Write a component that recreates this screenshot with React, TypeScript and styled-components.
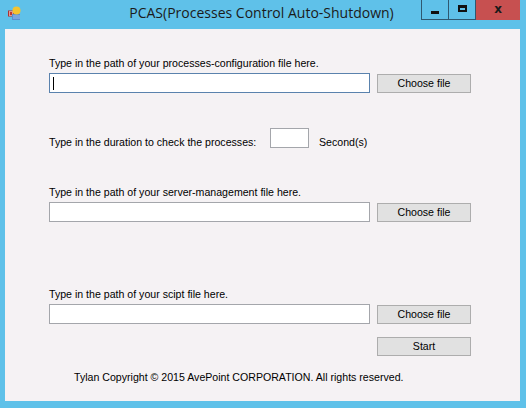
import React from "react";
import styled, { createGlobalStyle } from "styled-components";

const GlobalStyle = createGlobalStyle`
  html, body {
    margin: 0;
    padding: 0;
    background: #5fc1e9;
  }
`;

const Window = styled.div`
  width: 526px;
  height: 408px;
  background: #5fc1e9;
  display: flex;
  flex-direction: column;
  font-family: "Liberation Sans", Arial, sans-serif;
`;

const TitleBar = styled.div`
  height: 29px;
  display: flex;
  align-items: flex-start;
  padding: 0 6px 0 8px;
`;

const AppIcon = styled.svg`
  width: 13px;
  height: 14px;
  margin-top: 6px;
  flex: none;
`;

const Title = styled.div`
  flex: 1;
  text-align: center;
  font-family: "Open Sans", "Noto Sans", sans-serif;
  font-size: 14px;
  line-height: 20px;
  margin-top: 3px;
  padding-left: 81px;
  color: #1b1b1b;
  white-space: nowrap;
`;

const Controls = styled.div`
  display: flex;
  height: 20px;
  flex: none;
`;

const CtrlButton = styled.div<{ $close?: boolean; $w: number }>`
  width: ${(p) => p.$w}px;
  height: 20px;
  box-sizing: border-box;
  display: flex;
  align-items: center;
  justify-content: center;
  background: ${(p) => (p.$close ? "#c75050" : "transparent")};
  border: ${(p) => (p.$close ? "none" : "1px solid #2f5870")};
  border-top: none;
  & + & {
    border-left: none;
  }
`;

const MinGlyph = styled.div`
  width: 8px;
  height: 3px;
  background: #111;
  margin-top: 5px;
`;

const MaxGlyph = styled.div`
  width: 9px;
  height: 7px;
  box-sizing: border-box;
  border: 2px solid #111;
  border-top-width: 3px;
  margin-top: -3px;
`;

const CloseGlyph = styled.span`
  font-family: "DejaVu Sans", sans-serif;
  font-weight: bold;
  font-size: 12px;
  line-height: 12px;
  color: #1a1a1a;
  margin-top: -3px;
`;

const Client = styled.div`
  flex: 1;
  margin: 0 6px 7px 5px;
  background: #f5f2f4;
  padding: 28px 0 0 44px;
  display: flex;
  flex-direction: column;
  font-size: 10.6px;
  line-height: 13px;
  color: #000;
`;

const Field = styled.div<{ $top: number }>`
  margin-top: ${(p) => p.$top}px;
  display: flex;
  flex-direction: column;
  gap: 3px;
`;

const Label = styled.div`
  white-space: nowrap;
`;

const Row = styled.div`
  display: flex;
  align-items: flex-start;
  gap: 7px;
`;

const TextBox = styled.div<{ $focused?: boolean; $w: number }>`
  width: ${(p) => p.$w}px;
  height: 20px;
  box-sizing: border-box;
  background: #fff;
  border: 1px solid ${(p) => (p.$focused ? "#5a82ad" : "#a4a6ab")};
  position: relative;
`;

const Caret = styled.div`
  position: absolute;
  left: 3px;
  top: 3px;
  width: 1px;
  height: 13px;
  background: #000;
`;

const Button = styled.div<{ $nudge?: number }>`
  width: 94px;
  height: 19px;
  margin-top: ${(p) => p.$nudge ?? 0}px;
  box-sizing: border-box;
  background: #e1e1e1;
  border: 1px solid #adadad;
  display: flex;
  align-items: center;
  justify-content: center;
  padding-bottom: 1px;
`;

const DurationRow = styled.div`
  margin-top: 35px;
  display: flex;
  align-items: flex-start;
`;

const DurationLabel = styled.div`
  width: 221px;
  margin-top: 8px;
  white-space: nowrap;
`;

const Unit = styled.div`
  margin: 8px 0 0 10px;
`;

const StartRow = styled.div`
  margin: 13px 0 0 328px;
`;

const Copyright = styled.div`
  margin: 15px 0 0 25px;
  white-space: nowrap;
`;

type FileFieldProps = { top: number; label: string; focused?: boolean };

const FileField = ({ top, label, focused }: FileFieldProps) => (
  <Field $top={top}>
    <Label>{label}</Label>
    <Row>
      <TextBox $w={321} $focused={focused}>{focused && <Caret />}</TextBox>
      <Button $nudge={1}>Choose file</Button>
    </Row>
  </Field>
);

export default function App() {
  return (
    <Window>
      <GlobalStyle />
      <TitleBar>
        <AppIcon viewBox="0 0 13 14">
          <rect x="0.5" y="5" width="5" height="5" fill="#fff" stroke="#b03030" />
          <rect x="1.5" y="6" width="3" height="3" fill="#c0392b" />
          <rect x="4" y="8" width="8" height="6" fill="#5b8fd0" />
          <circle cx="8.5" cy="4.5" r="4" fill="#f4c430" />
          <rect x="5" y="9" width="7" height="4" fill="#7aa6dd" />
        </AppIcon>
        <Title>PCAS(Processes Control Auto-Shutdown)</Title>
        <Controls>
          <CtrlButton $w={28}>
            <MinGlyph />
          </CtrlButton>
          <CtrlButton $w={27}>
            <MaxGlyph />
          </CtrlButton>
          <CtrlButton $w={44} $close>
            <CloseGlyph>x</CloseGlyph>
          </CtrlButton>
        </Controls>
      </TitleBar>
      <Client>
        <FileField
          top={0}
          focused
          label="Type in the path of your processes-configuration file here."
        />
        <DurationRow>
          <DurationLabel>Type in the duration to check the processes:</DurationLabel>
          <TextBox $w={39} />
          <Unit>Second(s)</Unit>
        </DurationRow>
        <FileField
          top={37}
          label="Type in the path of your server-management file here."
        />
        <FileField top={66} label="Type in the path of your scipt file here." />
        <StartRow>
          <Button>Start</Button>
        </StartRow>
        <Copyright>Tylan Copyright © 2015 AvePoint CORPORATION. All rights reserved.</Copyright>
      </Client>
    </Window>
  );
}
